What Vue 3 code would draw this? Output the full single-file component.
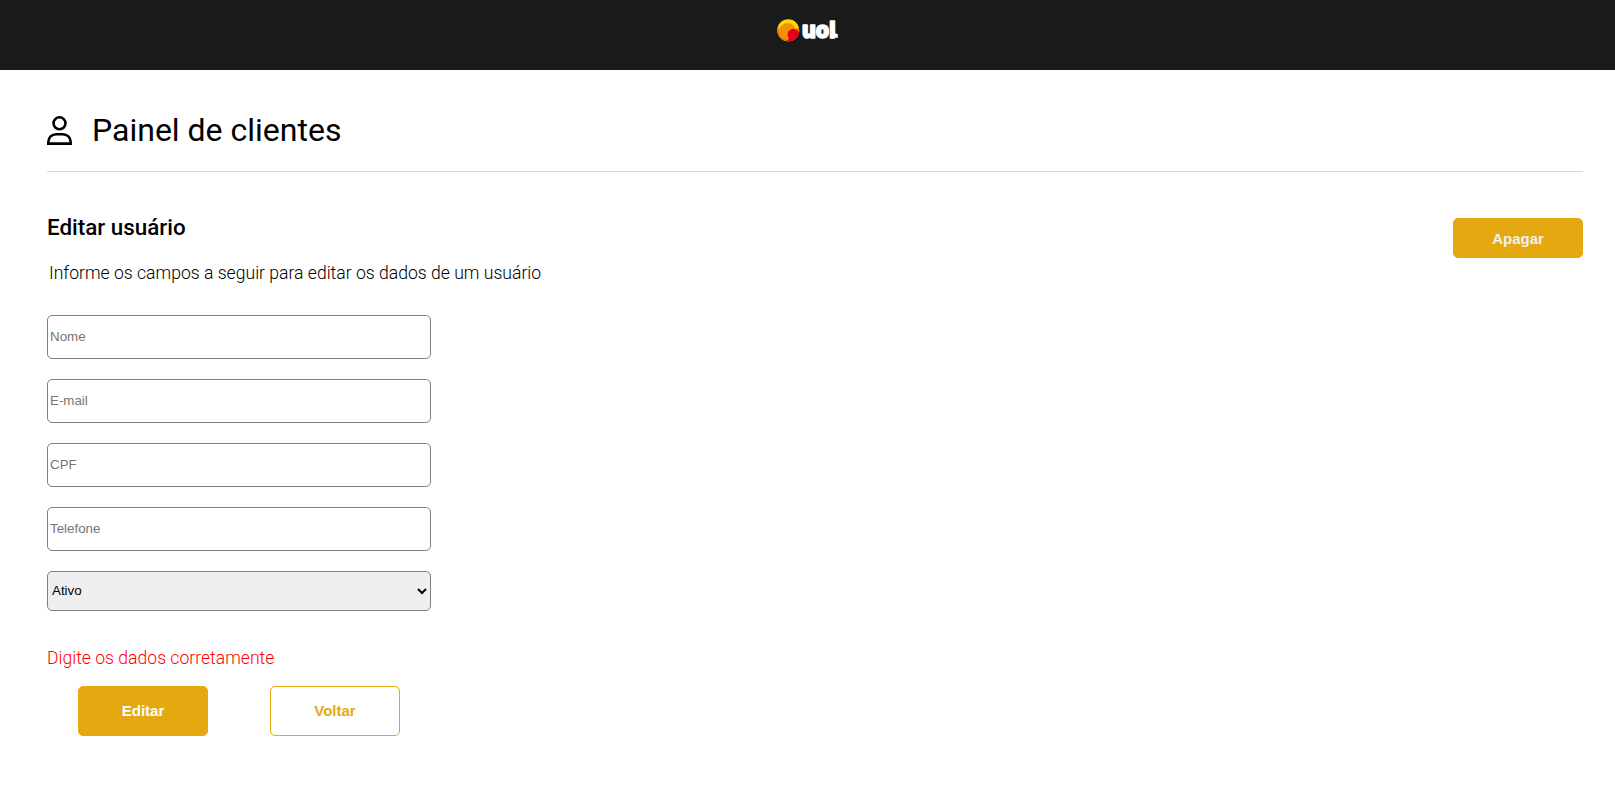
<script setup>
import { ref } from 'vue'

const fields = [
  { name: 'nome', label: 'Nome', type: 'text' },
  { name: 'email', label: 'E-mail', type: 'email' },
  { name: 'cpf', label: 'CPF', type: 'text' },
  { name: 'telefone', label: 'Telefone', type: 'text' },
]
const form = ref({ nome: '', email: '', cpf: '', telefone: '', status: 'Ativo' })
const statuses = ['Ativo', 'Inativo', 'Aguardando ativação', 'Desativado']
</script>

<template>
  <header class="topbar">
    <svg class="logo" width="64" height="26" viewBox="0 0 64 26">
      <defs>
        <clipPath id="ball"><circle cx="12.200" cy="13.200" r="11" /></clipPath>
      </defs>
      <g clip-path="url(#ball)">
        <rect width="25" height="26" fill="#ffd800" />
        <path d="M0 8 L2.500 9 C2.500 16 5 21 12 22 L20 12 L25 10 V26 H0Z" fill="#ee7203" />
        <circle cx="11.500" cy="14.500" r="8.500" fill="#f39200" />
        <circle cx="17.300" cy="17.500" r="5.700" fill="#e2001a" />
        <path d="M13 21 L22 14 L25 26 H10Z" fill="#e2001a" />
      </g>
      <text class="wordmark" x="26" y="20.500" textLength="33.500" lengthAdjust="spacingAndGlyphs">uol</text>
      <path d="M57.200 16 C57.400 18.300 58.800 19.100 61.800 18.800" fill="none" stroke="#fff" stroke-width="4" />
    </svg>
  </header>

  <main class="page">
    <div class="heading">
      <svg class="person" width="25" height="30" viewBox="0 0 25 30" fill="none" stroke="#000" stroke-width="2.600">
        <circle cx="12.500" cy="7.300" r="6" />
        <path d="M1.300 27.600 V26 C1.300 21.400 4.800 18.200 9.200 18.200 H15.800 C20.200 18.200 23.700 21.400 23.700 26 V27.600 Z" />
      </svg>
      <h1>Painel de clientes</h1>
    </div>

    <section class="intro">
      <div>
        <h2>Editar usuário</h2>
        <p>Informe os campos a seguir para editar os dados de um usuário</p>
      </div>
      <button class="btn delete" type="button">Apagar</button>
    </section>

    <form class="form" @submit.prevent>
      <input v-for="f in fields" :key="f.name" v-model="form[f.name]" :type="f.type" :placeholder="f.label" />
      <select v-model="form.status">
        <option v-for="s in statuses" :key="s">{{ s }}</option>
      </select>
      <p class="error">Digite os dados corretamente</p>
      <div class="actions">
        <button class="btn" type="submit">Editar</button>
        <button class="btn outline" type="button">Voltar</button>
      </div>
    </form>
  </main>
</template>

<style>
body {
  margin: 0;
  background: #fff;
}
</style>

<style scoped>
.topbar {
  height: 70px;
  box-sizing: border-box;
  padding-top: 17px;
  background: #1a1a1a;
  display: flex;
  justify-content: center;
}
.logo {
  display: block;
  overflow: visible;
}
.wordmark {
  font: 900 22.5px Inter, sans-serif;
  fill: #fff;
  stroke: #fff;
  stroke-width: 1.3px;
  stroke-linejoin: round;
}
.page {
  padding: 0 32px 0 47px;
  font-family: Roboto, sans-serif;
  color: #000;
}
.heading {
  height: 101px;
  border-bottom: 1px solid #d9d9d9;
  display: flex;
  align-items: flex-start;
  gap: 20px;
}
.person {
  margin-top: 46px;
}
h1 {
  margin: 41px 0 0;
  font-size: 32px;
  font-weight: 400;
  line-height: 38px;
}
.intro {
  display: flex;
  justify-content: space-between;
  height: 143px;
}
h2 {
  margin: 42px 0 0;
  font-size: 22.4px;
  font-weight: 500;
  line-height: 26px;
}
.intro p {
  margin: 23px 0 0 2px;
  font-size: 17.6px;
  font-weight: 300;
  line-height: 21px;
}
.btn {
  width: 130px;
  height: 50px;
  box-sizing: border-box;
  border: 1px solid #e4a911;
  border-radius: 5px;
  padding: 0 0 2px;
  background: #e4a911;
  color: #fff;
  font: bold 15px "Liberation Sans", Arial, sans-serif;
}
.delete {
  height: 40px;
  margin-top: 46px;
  padding: 0;
  color: #f0f0f0;
}
.outline {
  background: #fff;
  color: #e4a911;
}
.form {
  width: 384px;
  display: flex;
  flex-direction: column;
  gap: 20px;
}
input,
select {
  box-sizing: border-box;
  width: 100%;
  height: 44px;
  margin: 0;
  border: 1px solid #808080;
  border-radius: 5px;
  font: 13.333px "Liberation Sans", Arial, sans-serif;
}
input {
  padding: 1px 2px 3px;
  background: #fff;
}
input::placeholder {
  color: #757575;
}
select {
  height: 40px;
  padding-bottom: 2px;
  background-color: #efefef;
  color: #000;
}
.error {
  margin: 17px 0 -3px;
  font-size: 17.6px;
  font-weight: 300;
  line-height: 21px;
  color: #f00;
}
.actions {
  display: flex;
  justify-content: space-around;
}
</style>
